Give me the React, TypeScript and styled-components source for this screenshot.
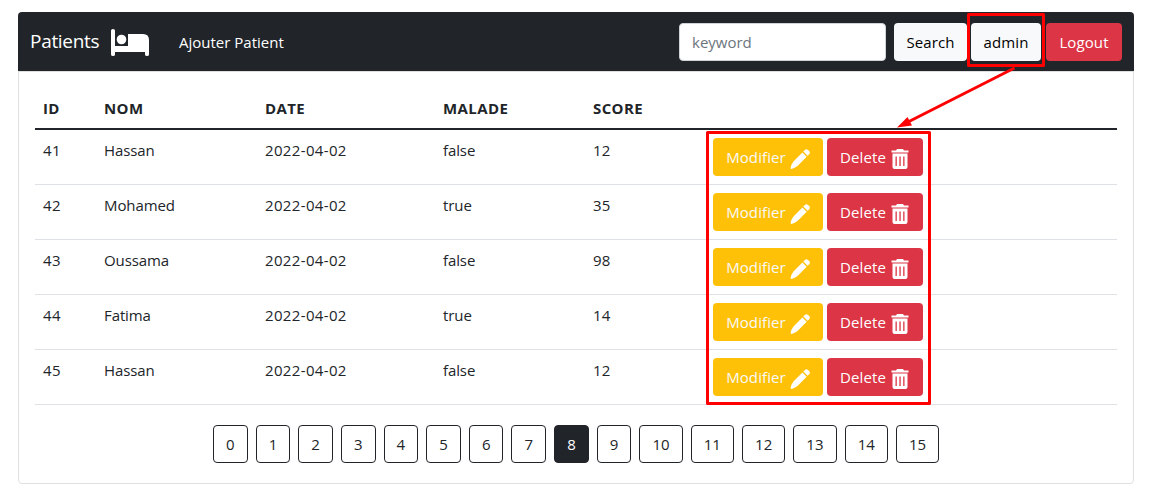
import React from "react";
import styled, { createGlobalStyle, css } from "styled-components";

const GlobalStyle = createGlobalStyle`
  *, *::before, *::after { box-sizing: border-box; }
  body {
    margin: 0;
    background: #fff;
    color: #212529;
    font-family: "Open Sans", "Noto Sans", sans-serif;
    font-size: 15px;
    line-height: 24px;
  }
`;

const Page = styled.div`
  position: relative;
  width: 1149px;
  height: 501px;
  padding: 12px 15px 17px 18px;
  overflow: hidden;
`;

const Card = styled.main`
  display: flex;
  flex-direction: column;
  height: 472px;
  border: 1px solid #dfdfdf;
  border-radius: 4px;
`;

const Navbar = styled.nav`
  display: flex;
  align-items: center;
  justify-content: space-between;
  height: 59px;
  margin: -1px -1px 0;
  padding: 1px 12px 0;
  background: #212529;
  border-radius: 4px 4px 0 0;
  color: #fff;
`;

const NavGroup = styled.div`
  display: flex;
  align-items: center;
`;

const Brand = styled.span`
  display: flex;
  align-items: center;
  width: 149px;
  gap: 11px;
  font-size: 19px;
  line-height: 30px;
`;

const BrandName = styled.span`
  width: 70px;
  margin-top: -2px;
  letter-spacing: -0.3px;
  white-space: nowrap;
`;

const BedIcon = styled.svg`
  width: 38px;
  height: 27px;
  fill: #fff;
`;

const NavLink = styled.a`
  color: #fff;
  white-space: nowrap;
`;

const SearchInput = styled.input`
  width: 207px;
  height: 38px;
  margin-right: 8px;
  padding: 6px 12px;
  border: 1px solid #ced4da;
  border-radius: 4px;
  background: #fff;
  font: inherit;
  &::placeholder { color: #6c757d; opacity: 1; }
`;

const tones = {
  light: css`background: #f8f9fa; color: #000;`,
  danger: css`background: #dc3545; color: #fff;`,
  warning: css`background: #ffc107; color: #f8f9fa;`,
};

const Button = styled.button<{ $tone: keyof typeof tones; $width: number; $gap?: number }>`
  display: flex;
  align-items: center;
  justify-content: center;
  width: ${(p) => p.$width}px;
  height: 38px;
  margin-right: ${(p) => p.$gap ?? 4}px;
  padding: 0;
  border: 0;
  border-radius: 4px;
  font: inherit;
  letter-spacing: 0.1px;
  white-space: nowrap;
  ${(p) => tones[p.$tone]}
`;

const Body = styled.section`
  padding: 16px 16px 0;
  border-top: 1px solid #dfdfdf;
`;

const Table = styled.table`
  width: 1082px;
  border-collapse: separate;
  border-spacing: 0;
  table-layout: fixed;
`;

const HeadCell = styled.th<{ $width: number }>`
  width: ${(p) => p.$width}px;
  height: 42px;
  padding: 0 8px;
  border-bottom: 2px solid #212529;
  font-weight: 700;
  letter-spacing: 0.4px;
  text-align: left;
`;

const Cell = styled.td<{ $spacing?: number }>`
  height: 55px;
  padding: 8px 8px 0;
  border-bottom: 1px solid #dee2e6;
  letter-spacing: ${(p) => p.$spacing ?? 0}px;
  vertical-align: top;
`;

const Actions = styled.div`
  display: flex;
`;

const ButtonIcon = styled.svg`
  width: 20px;
  height: 20px;
  margin: 3px 0 0 4px;
  fill: #fff;
`;

const Pagination = styled.div`
  display: flex;
  gap: 8px;
  margin: 20px 0 0 178px;
`;

const PageButton = styled.button<{ $active: boolean; $wide: boolean }>`
  width: ${(p) => (p.$wide ? 43.3 : 34.65)}px;
  height: 38px;
  padding: 0;
  border: 1px solid #212529;
  border-radius: 4px;
  background: ${(p) => (p.$active ? "#212529" : "#fff")};
  color: ${(p) => (p.$active ? "#fff" : "#212529")};
  font: inherit;
`;

const Annotation = styled.svg`
  position: absolute;
  inset: 0;
  width: 1149px;
  height: 501px;
  pointer-events: none;
`;

const columns: [string, number][] = [
  ["ID", 61],
  ["NOM", 161],
  ["DATE", 178],
  ["MALADE", 150],
  ["SCORE", 120],
  ["", 412],
];

const patients = [
  { id: 41, name: "Hassan", date: "2022-04-02", sick: false, score: 12 },
  { id: 42, name: "Mohamed", date: "2022-04-02", sick: true, score: 35 },
  { id: 43, name: "Oussama", date: "2022-04-02", sick: false, score: 98 },
  { id: 44, name: "Fatima", date: "2022-04-02", sick: true, score: 14 },
  { id: 45, name: "Hassan", date: "2022-04-02", sick: false, score: 12 },
];

const currentPage = 8;
const pages = Array.from({ length: 16 }, (_, i) => i);

const Pencil = () => (
  <ButtonIcon viewBox="0 0 20 20">
    <path d="M13.3 2.5 14.9.9q1.500-1.400 3.100 0l1.200 1.200q1.400 1.500 0 3.100L17.600 6.800zM12.400 3.400 16.700 7.700 7.500 17Q4.800 19.200 1.600 19.900q-1.200.1-1-1.100Q1.200 15.500 3.500 12.500z" />
  </ButtonIcon>
);

const Trash = () => (
  <ButtonIcon viewBox="0 0 20 20">
    <path d="M1.500 1.500H6L7 0h6l1 1.500h4.500v2h-17z" />
    <path fillRule="evenodd" d="M2.500 4.500h15V18a2 2 0 0 1-2 2h-11a2 2 0 0 1-2-2zM5.500 7.500v9.500h1.300V7.500zM9.400 7.500v9.500h1.300V7.500zM13.200 7.500v9.500h1.300V7.500z" />
  </ButtonIcon>
);

export default function App() {
  return (
    <>
      <GlobalStyle />
      <Page>
        <Card>
          <Navbar>
            <NavGroup>
              <Brand>
                <BrandName>Patients</BrandName>
                <BedIcon viewBox="0 0 38 27">
                  <path d="M0 1.500Q0 0 2 0t2 1.500V17h13V5h15q6 0 6 6v14.500q0 1.500-2 1.500t-2-1.500V23H4v2.500Q4 27 2 27t-2-1.500z" />
                  <circle cx="10.500" cy="10.500" r="4.800" />
                </BedIcon>
              </Brand>
              <NavLink>Ajouter Patient</NavLink>
            </NavGroup>
            <NavGroup>
              <SearchInput placeholder="keyword" />
              <Button $tone="light" $width={73}>Search</Button>
              <Button $tone="light" $width={70} $gap={5}>admin</Button>
              <Button $tone="danger" $width={76} $gap={0}>Logout</Button>
            </NavGroup>
          </Navbar>
          <Body>
            <Table>
              <thead>
                <tr>
                  {columns.map(([label, width]) => (
                    <HeadCell key={label} $width={width}>{label}</HeadCell>
                  ))}
                </tr>
              </thead>
              <tbody>
                {patients.map((p) => (
                  <tr key={p.id}>
                    <Cell $spacing={0.3}>{p.id}</Cell>
                    <Cell $spacing={-0.1}>{p.name}</Cell>
                    <Cell $spacing={0.35}>{p.date}</Cell>
                    <Cell $spacing={-0.1}>{String(p.sick)}</Cell>
                    <Cell $spacing={0.2}>{p.score}</Cell>
                    <Cell>
                      <Actions>
                        <Button $tone="warning" $width={110}>Modifier<Pencil /></Button>
                        <Button $tone="danger" $width={96}>Delete<Trash /></Button>
                      </Actions>
                    </Cell>
                  </tr>
                ))}
              </tbody>
            </Table>
            <Pagination>
              {pages.map((n) => (
                <PageButton key={n} $active={n === currentPage} $wide={n > 9}>{n}</PageButton>
              ))}
            </Pagination>
          </Body>
        </Card>
        <Annotation viewBox="0 0 1149 501">
          <g fill="none" stroke="#f00" strokeWidth="3" strokeLinejoin="round">
            <rect x="968.5" y="14.500" width="75" height="51" />
            <rect x="707.500" y="132.500" width="222" height="271" />
            <path d="M1014.500 68 909 121.500" />
          </g>
          <path fill="#f00" d="M897 127.500 907.500 117l4.500 8.500z" />
        </Annotation>
      </Page>
    </>
  );
}
